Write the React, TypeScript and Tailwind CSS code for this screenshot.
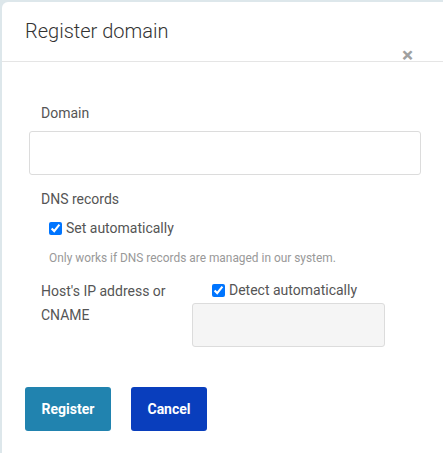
import React from "react";

const font = { fontFamily: "Roboto, 'Liberation Sans', sans-serif" };

export default function App() {
  return (
    <div
      className="w-[443px] h-[453px] overflow-hidden bg-[#dde7eb] pl-[2px] pt-[2px]"
      style={font}
    >
      <div className="h-full bg-white rounded-tl-[6px]">
        {/* header */}
        <div className="relative h-[60px] border-b border-[#e5e5e5] pl-[23px] pt-[16px]">
          <h4 className="text-[20px] leading-[26px] font-light text-[#333]">
            Register domain
          </h4>
          <span className="absolute left-[400px] top-[43px] text-[21px] leading-[21px] font-bold text-[#a0a0a0]">
            ×
          </span>
        </div>

        {/* body */}
        <div className="pl-[27px] pr-[20px] pt-[41px]">
          <label className="block pl-[12px] text-[14px] leading-[20px] text-[#555]">
            Domain
          </label>
          <input
            type="text"
            className="mt-[8px] block w-[392px] h-[44px] rounded-[3px] border border-[#dcdcdc] bg-white outline-none"
          />

          <div className="mt-[14px] pl-[12px] text-[14px] leading-[20px] text-[#555]">
            DNS records
          </div>
          <label className="mt-[9px] flex items-center pl-[20px] text-[14px] leading-[20px] text-[#555]">
            <input type="checkbox" defaultChecked className="m-0 mr-[4px] w-[13px] h-[13px]" />
            Set automatically
          </label>
          <p className="mt-[12px] pl-[20px] text-[11.9px] leading-[16px] text-[#999]">
            Only works if DNS records are managed in our system.
          </p>

          <div className="mt-[13px] flex">
            <div className="w-[163px] pl-[12px] text-[14px] leading-[24px] text-[#555]">
              Host's IP address or
              <br />
              CNAME
            </div>
            <div className="flex flex-col">
              <label className="mt-[1px] flex items-center pl-[20px] text-[14px] leading-[20px] text-[#555]">
                <input type="checkbox" defaultChecked className="m-0 mr-[4px] w-[13px] h-[13px]" />
                Detect automatically
              </label>
              <input
                type="text"
                disabled
                className="mt-[3px] block w-[193px] h-[44px] rounded-[3px] border border-[#dcdcdc] bg-[#f5f5f5]"
              />
            </div>
          </div>

          <div className="mt-[40px] -ml-[4px] flex gap-[20px]">
            <button className="w-[86px] h-[44px] rounded-[3px] bg-[#2183af] text-white text-[14px] font-bold">
              Register
            </button>
            <button className="w-[76px] h-[44px] rounded-[3px] bg-[#093ebd] text-white text-[14px] font-bold">
              Cancel
            </button>
          </div>
        </div>
      </div>
    </div>
  );
}
